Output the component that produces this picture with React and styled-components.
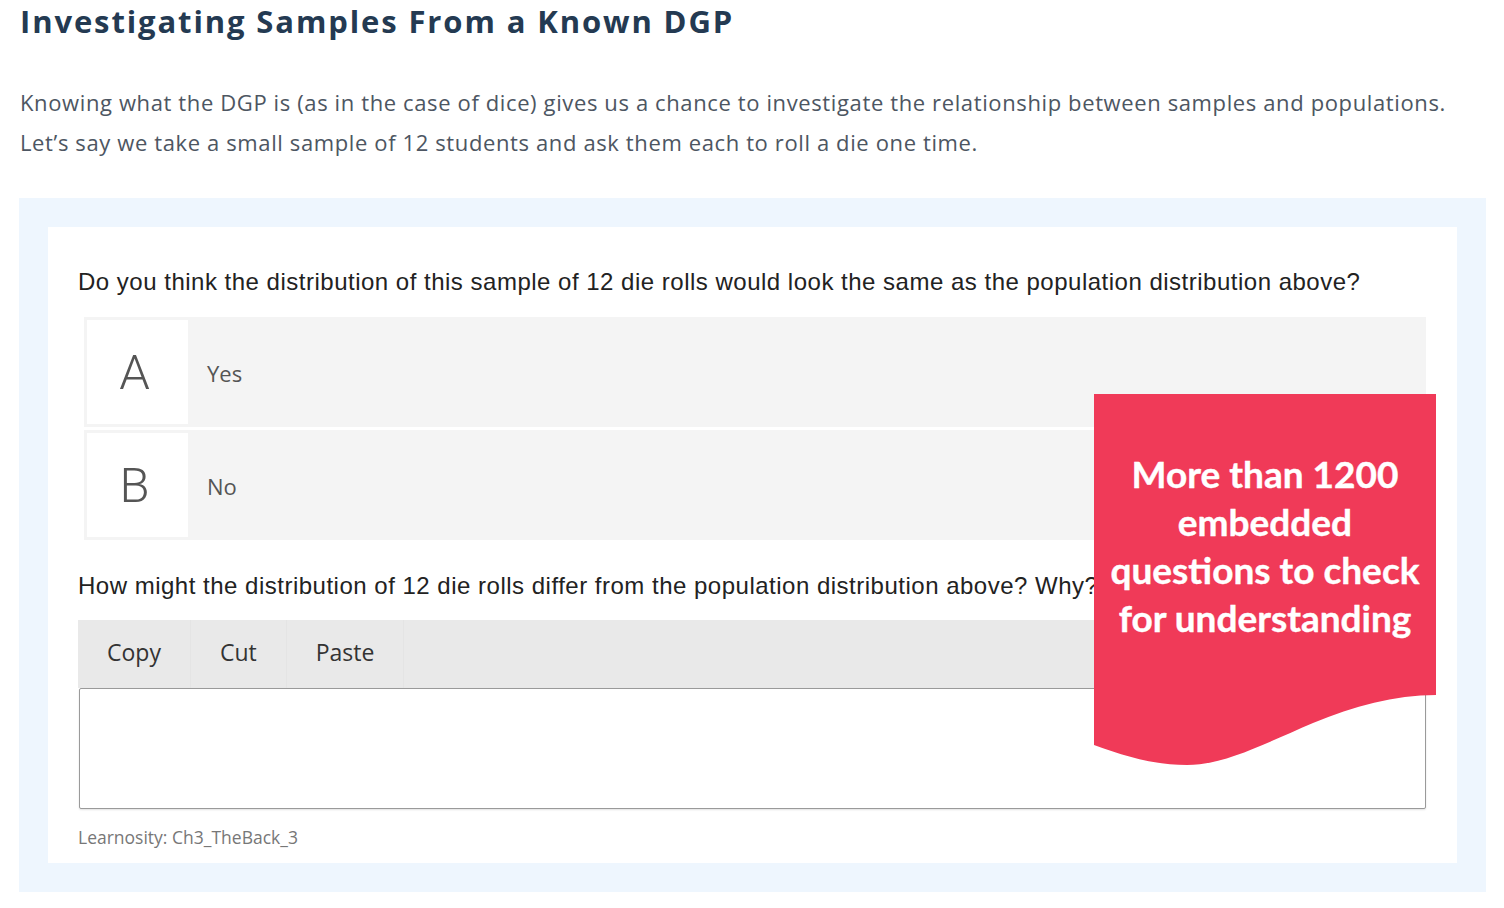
import React from "react";
import styled, { createGlobalStyle } from "styled-components";

const Global = createGlobalStyle`
  html, body { margin: 0; padding: 0; background: #ffffff; }
  * { box-sizing: border-box; }
`;

const Page = styled.div`
  width: 1504px;
  padding: 3px 18px 16px 19px;
  font-family: "Open Sans", sans-serif;
`;

const Heading = styled.h2`
  margin: 0 0 0 1px;
  font-family: "Open Sans", sans-serif;
  font-weight: 700;
  font-size: 31px;
  line-height: 36px;
  color: #243a52;
  letter-spacing: 1.88px;
`;

const Intro = styled.p`
  margin: 43px 0 36px 1px;
  font-family: "Open Sans", sans-serif;
  font-size: 22px;
  line-height: 40px;
  letter-spacing: 0.62px;
  color: #4d5662;
`;

const Frame = styled.section`
  background: #eef6fe;
  padding: 29px;
`;

const Card = styled.div`
  position: relative;
  background: #ffffff;
  padding: 40px 31px 14px 30px;
`;

const Question = styled.p`
  margin: 0 0 ${(p) => p.$gap}px;
  font-family: "Liberation Sans", Arial, sans-serif;
  font-size: 24px;
  line-height: 30px;
  letter-spacing: 0.5px;
  color: #222222;
`;

const Options = styled.div`
  display: flex;
  flex-direction: column;
  gap: 3px;
  margin: 0 0 31px 6px;
`;

const Option = styled.div`
  display: flex;
  align-items: stretch;
  height: 110px;
  padding: 3px;
  background: #f4f4f4;
`;

const Letter = styled.div`
  width: 101px;
  display: flex;
  align-items: center;
  justify-content: center;
  padding-right: 6px;
  background: #ffffff;
  font-family: "Roboto", sans-serif;
  font-weight: 300;
  font-size: 49px;
  color: #555555;
`;

const OptionLabel = styled.div`
  display: flex;
  align-items: center;
  padding: 1px 0 0 19px;
  font-family: "Open Sans", sans-serif;
  font-size: 22px;
  color: #555555;
`;

const Toolbar = styled.div`
  display: flex;
  height: 68px;
  background: #e9e9e9;
`;

const ToolButton = styled.div`
  display: flex;
  align-items: center;
  padding: 0 29px 5px;
  border-right: 1px solid #e4e4e4;
  font-family: "Open Sans", sans-serif;
  font-size: 23px;
  color: #333333;
`;

const Answer = styled.div`
  height: 121px;
  margin-left: 1px;
  background: #ffffff;
  border: 1px solid #9a9a9a;
  border-radius: 2px;
  box-shadow: 0 1px 2px rgba(0, 0, 0, 0.12);
`;

const Reference = styled.div`
  margin-top: 16px;
  font-family: "Open Sans", sans-serif;
  font-size: 17.5px;
  line-height: 24px;
  color: #777777;
`;

const Banner = styled.div`
  position: absolute;
  left: 1046px;
  top: 167px;
  width: 342px;
  height: 372px;
  padding-top: 56px;
  text-align: center;
`;

const BannerShape = styled.svg`
  position: absolute;
  inset: 0;
  width: 342px;
  height: 372px;
`;

const BannerText = styled.div`
  position: relative;
  font-family: "Lato", "Open Sans", sans-serif;
  font-weight: 700;
  font-size: 37px;
  line-height: 48px;
  color: #ffffff;
  -webkit-text-stroke: 0.4px #ffffff;
`;

export default function App() {
  return (
    <>
      <Global />
      <Page>
        <Heading>Investigating Samples From a Known DGP</Heading>
        <Intro>
          Knowing what the DGP is (as in the case of dice) gives us a chance to investigate the
          relationship between samples and populations.
          <br />
          Let’s say we take a small sample of 12 students and ask them each to roll a die one time.
        </Intro>
        <Frame>
          <Card>
            <Question $gap={20}>
              Do you think the distribution of this sample of 12 die rolls would look the same as the
              population distribution above?
            </Question>
            <Options>
              <Option>
                <Letter>A</Letter>
                <OptionLabel>Yes</OptionLabel>
              </Option>
              <Option>
                <Letter>B</Letter>
                <OptionLabel>No</OptionLabel>
              </Option>
            </Options>
            <Question $gap={19}>
              How might the distribution of 12 die rolls differ from the population distribution
              above? Why?
            </Question>
            <Toolbar>
              <ToolButton>Copy</ToolButton>
              <ToolButton>Cut</ToolButton>
              <ToolButton>Paste</ToolButton>
            </Toolbar>
            <Answer />
            <Reference>Learnosity: Ch3_TheBack_3</Reference>
            <Banner>
              <BannerShape viewBox="0 0 342 372" aria-hidden="true">
                <path
                  d="M0 0 H342 V301 C300 301 260 312 219 329 C170 350 130 371 93 371 C60 371 30 362 0 351 Z"
                  fill="#f03a58"
                />
              </BannerShape>
              <BannerText>
                More than 1200
                <br />
                embedded
                <br />
                questions to check
                <br />
                for understanding
              </BannerText>
            </Banner>
          </Card>
        </Frame>
      </Page>
    </>
  );
}
